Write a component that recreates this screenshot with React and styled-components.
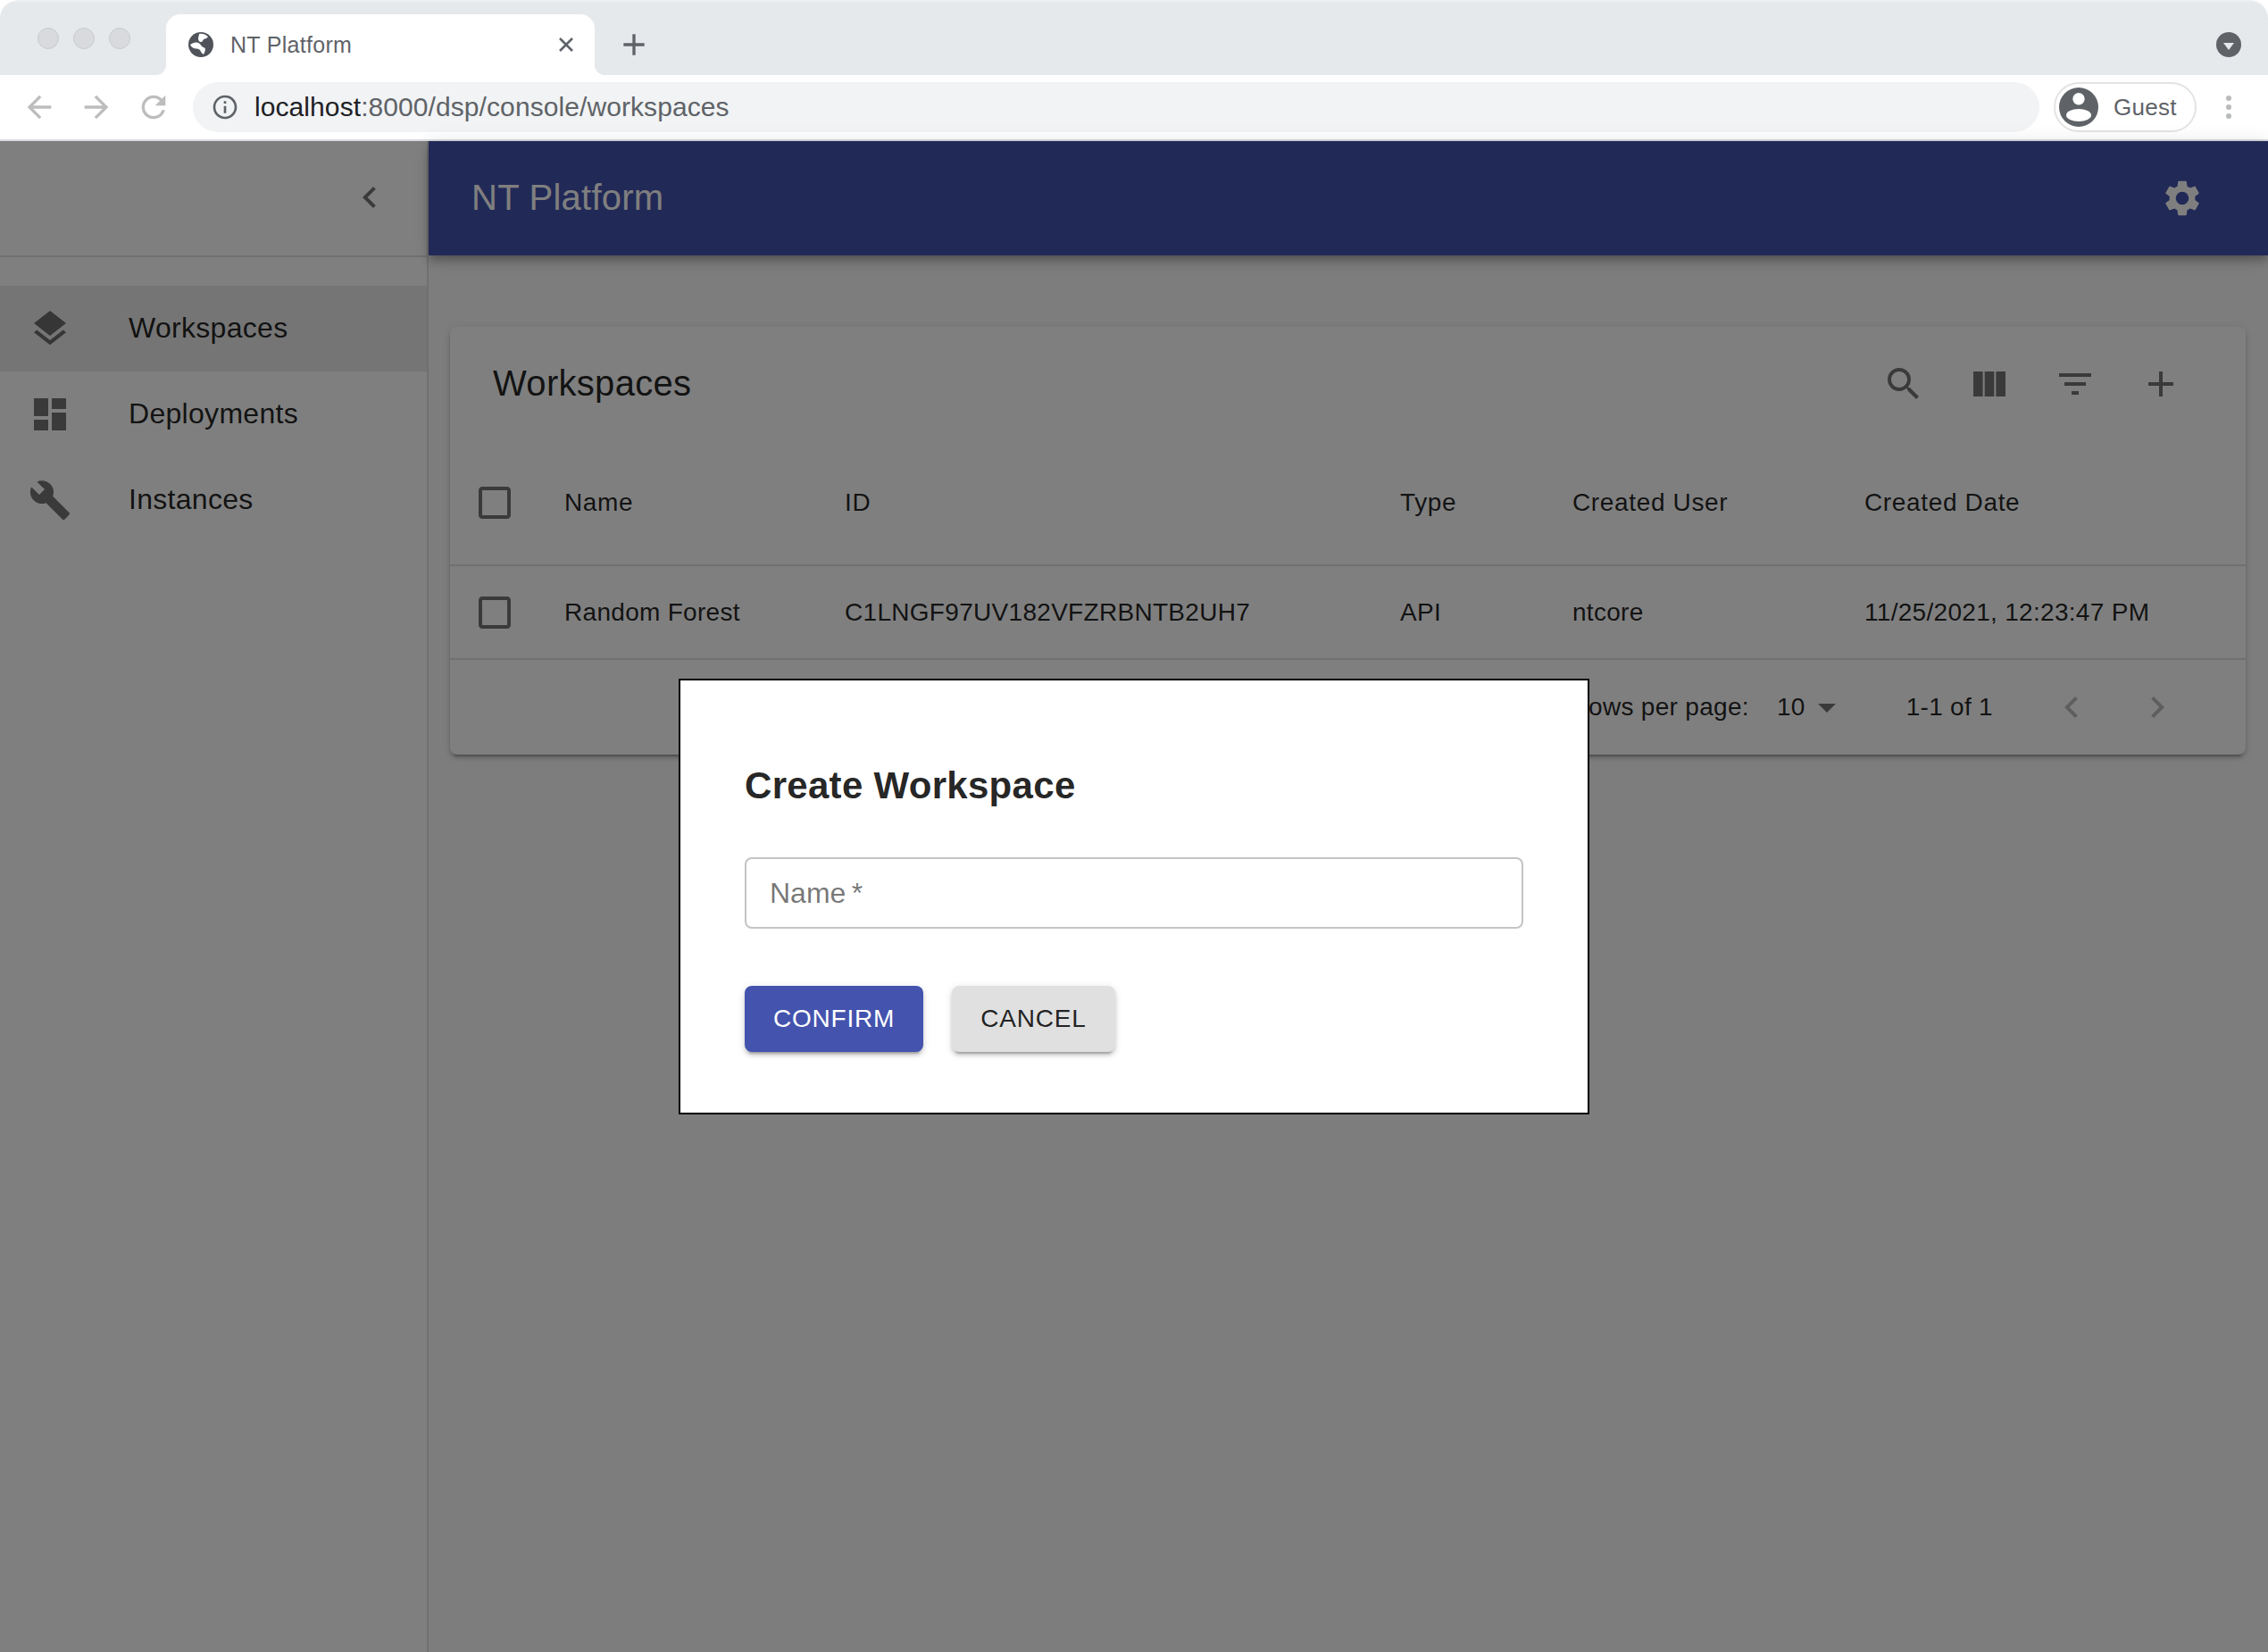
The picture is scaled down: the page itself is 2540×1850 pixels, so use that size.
import styled, { createGlobalStyle } from "styled-components";
import {
  MdLayers,
  MdDashboard,
  MdBuild,
  MdSearch,
  MdViewColumn,
  MdFilterList,
  MdAdd,
  MdSettings,
  MdChevronLeft,
  MdChevronRight,
  MdArrowDropDown,
  MdCheckBoxOutlineBlank,
  MdArrowBack,
  MdArrowForward,
  MdRefresh,
  MdInfoOutline,
} from "react-icons/md";

const GlobalStyle = createGlobalStyle`
  html, body {
    margin: 0;
    padding: 0;
    background: #fff;
  }
  * {
    box-sizing: border-box;
  }
  body {
    font-family: "Liberation Sans", Arial, sans-serif;
  }
`;

const navItems = [
  { label: "Workspaces", Icon: MdLayers, selected: true },
  { label: "Deployments", Icon: MdDashboard },
  { label: "Instances", Icon: MdBuild },
];

const GlobeIcon = () => (
  <svg width="30" height="30" viewBox="0 0 30 30">
    <circle cx="15" cy="15" r="14" fill="#50535a" />
    <path
      d="M13 3c3-1 7 0 10 3-1 2-3 2-5 3-1 1-1 3-3 3-2 0-3-2-3-4 0-2 1-3 1-5z"
      fill="#fff"
    />
    <path
      d="M3 15c3-2 6-3 9-2 3 1 3 4 6 5 3 1 2 4 0 8-2-1-3-3-4-5-2-2-5-1-7-2-2-1-3-2-4-4z"
      fill="#fff"
    />
  </svg>
);

const CloseIcon = () => (
  <svg width="18" height="18" viewBox="0 0 18 18" stroke="#5f6368" strokeWidth="2.6">
    <path d="M2 2l14 14M16 2 2 16" />
  </svg>
);

const AvatarIcon = () => (
  <svg width="44" height="44" viewBox="0 0 44 44">
    <circle cx="22" cy="22" r="22" fill="#5f6368" />
    <circle cx="22" cy="12.7" r="6.7" fill="#fff" />
    <ellipse cx="22" cy="31" rx="14" ry="7" fill="#fff" />
  </svg>
);

const App = () => {
  return (
    <>
      <GlobalStyle />
      <Window>
        <TabStrip>
          <Lights>
            <Light />
            <Light />
            <Light />
          </Lights>
          <Tab>
            <GlobeIcon />
            <TabTitle>NT Platform</TabTitle>
            <CloseIcon />
          </Tab>
          <NewTab>
            <MdAdd />
          </NewTab>
          <TabSearch>
            <span />
          </TabSearch>
        </TabStrip>
        <AddressBar>
          <NavButton>
            <MdArrowBack />
          </NavButton>
          <NavButton>
            <MdArrowForward />
          </NavButton>
          <NavButton>
            <MdRefresh />
          </NavButton>
          <UrlPill>
            <MdInfoOutline />
            <UrlText>
              <b>localhost</b>:8000/dsp/console/workspaces
            </UrlText>
          </UrlPill>
          <Profile>
            <AvatarIcon />
            <span>Guest</span>
          </Profile>
          <MenuDots>
            <i />
            <i />
            <i />
          </MenuDots>
        </AddressBar>
        <AppFrame>
          <Sidebar>
            <SidebarHead>
              <MdChevronLeft />
            </SidebarHead>
            <NavList>
              {navItems.map(({ label, Icon, selected }) => (
                <NavItem key={label} $selected={selected}>
                  <Icon />
                  <span>{label}</span>
                </NavItem>
              ))}
            </NavList>
          </Sidebar>
          <Content>
            <Header>
              <HeaderTitle>NT Platform</HeaderTitle>
              <MdSettings />
            </Header>
            <Main>
              <Card>
                <CardBar>
                  <CardTitle>Workspaces</CardTitle>
                  <CardActions>
                    <MdSearch />
                    <MdViewColumn />
                    <MdFilterList />
                    <MdAdd />
                  </CardActions>
                </CardBar>
                <Table>
                  <colgroup>
                    <col width="96" />
                    <col width="314" />
                    <col width="622" />
                    <col width="193" />
                    <col width="327" />
                    <col />
                  </colgroup>
                  <thead>
                    <HeadRow>
                      <CheckCell>
                        <MdCheckBoxOutlineBlank />
                      </CheckCell>
                      <HeadCell>Name</HeadCell>
                      <HeadCell>ID</HeadCell>
                      <HeadCell>Type</HeadCell>
                      <HeadCell>Created User</HeadCell>
                      <HeadCell>Created Date</HeadCell>
                    </HeadRow>
                  </thead>
                  <tbody>
                    <BodyRow>
                      <CheckCell>
                        <MdCheckBoxOutlineBlank />
                      </CheckCell>
                      <Cell>Random Forest</Cell>
                      <Cell>C1LNGF97UV182VFZRBNTB2UH7</Cell>
                      <Cell>API</Cell>
                      <Cell>ntcore</Cell>
                      <Cell>11/25/2021, 12:23:47 PM</Cell>
                    </BodyRow>
                  </tbody>
                </Table>
                <Pager>
                  <span>Rows per page:</span>
                  <PageSize>
                    10
                    <MdArrowDropDown />
                  </PageSize>
                  <PageRange>1-1 of 1</PageRange>
                  <PageButton>
                    <MdChevronLeft />
                  </PageButton>
                  <PageButton>
                    <MdChevronRight />
                  </PageButton>
                </Pager>
              </Card>
            </Main>
          </Content>
          <Backdrop>
            <Dialog>
              <DialogTitle>Create Workspace</DialogTitle>
              <NameInput placeholder={"Name\u2009*"} />
              <DialogActions>
                <ActionButton $primary>CONFIRM</ActionButton>
                <ActionButton>CANCEL</ActionButton>
              </DialogActions>
            </Dialog>
          </Backdrop>
        </AppFrame>
      </Window>
    </>
  );
};

const Window = styled.div`
  width: 2540px;
  height: 1850px;
  display: flex;
  flex-direction: column;
  overflow: hidden;
`;

const TabStrip = styled.div`
  height: 84px;
  flex: none;
  display: flex;
  align-items: flex-end;
  background: #e6e9ec;
  border-top: 2px solid #eef0f2;
  border-radius: 20px 20px 0 0;
`;

const Lights = styled.div`
  width: 186px;
  height: 100%;
  display: flex;
  gap: 16px;
  padding: 29px 0 0 42px;
`;

const Light = styled.span`
  width: 24px;
  height: 24px;
  border-radius: 50%;
  background: #d8dadd;
  border: 1px solid #c8cacd;
`;

const Tab = styled.div`
  position: relative;
  width: 480px;
  height: 68px;
  display: flex;
  align-items: center;
  padding: 0 23px 0 24px;
  background: #fff;
  border-radius: 16px 16px 0 0;
  &::before,
  &::after {
    content: "";
    position: absolute;
    bottom: 0;
    width: 12px;
    height: 12px;
  }
  &::before {
    left: -12px;
    background: radial-gradient(circle at 0 0, #e6e9ec 12px, #fff 12.5px);
  }
  &::after {
    right: -12px;
    background: radial-gradient(circle at 100% 0, #e6e9ec 12px, #fff 12.5px);
  }
`;

const TabTitle = styled.span`
  flex: 1;
  margin-left: 18px;
  font-size: 25px;
  letter-spacing: 0.3px;
  color: #5f6368;
`;

const NewTab = styled.div`
  width: 40px;
  height: 68px;
  margin-left: 24px;
  display: flex;
  align-items: center;
  justify-content: center;
  font-size: 40px;
  color: #5f6368;
  svg {
    flex: none;
  }
`;

const TabSearch = styled.div`
  margin-left: auto;
  width: 28px;
  height: 28px;
  margin-right: 30px;
  margin-bottom: 20px;
  display: flex;
  align-items: center;
  justify-content: center;
  border-radius: 50%;
  background: #5f6368;
  span {
    width: 0;
    height: 0;
    margin-top: 3px;
    border-left: 6px solid transparent;
    border-right: 6px solid transparent;
    border-top: 8px solid #e6e9ec;
  }
`;

const AddressBar = styled.div`
  height: 74px;
  flex: none;
  display: flex;
  align-items: flex-start;
  padding: 8px 8px 0 12px;
  background: #fff;
  border-bottom: 2px solid #d8dbdf;
`;

const NavButton = styled.div`
  width: 64px;
  height: 56px;
  display: flex;
  align-items: center;
  justify-content: center;
  font-size: 40px;
  color: #bdbdbd;
`;

const UrlPill = styled.div`
  flex: 1;
  height: 56px;
  margin-left: 12px;
  display: flex;
  align-items: center;
  padding: 0 20px;
  background: #f1f3f4;
  border-radius: 28px;
  svg {
    font-size: 32px;
    color: #5f6368;
  }
`;

const UrlText = styled.span`
  margin-left: 17px;
  font-size: 30px;
  letter-spacing: 0.08px;
  color: #5f6368;
  b {
    font-weight: 400;
    color: #202124;
  }
`;

const Profile = styled.div`
  width: 160px;
  height: 56px;
  margin-left: 16px;
  display: flex;
  align-items: center;
  gap: 17px;
  padding-left: 4px;
  border: 2px solid #e2e3e5;
  border-radius: 28px;
  font-size: 26px;
  letter-spacing: 0.3px;
  color: #5f6368;
`;

const MenuDots = styled.div`
  width: 72px;
  height: 56px;
  display: flex;
  flex-direction: column;
  align-items: center;
  justify-content: center;
  gap: 4px;
  i {
    width: 6px;
    height: 6px;
    border-radius: 50%;
    background: #b9babb;
  }
`;

const AppFrame = styled.div`
  position: relative;
  flex: 1;
  display: flex;
  min-height: 0;
`;

const Sidebar = styled.aside`
  width: 480px;
  flex: none;
  background: #fff;
  border-right: 2px solid rgba(0, 0, 0, 0.12);
`;

const SidebarHead = styled.div`
  height: 130px;
  display: flex;
  align-items: center;
  justify-content: flex-end;
  padding: 0 40px 2px 0;
  border-bottom: 2px solid rgba(0, 0, 0, 0.12);
  font-size: 48px;
  color: rgba(0, 0, 0, 0.54);
`;

const NavList = styled.nav`
  padding-top: 32px;
`;

const NavItem = styled.div`
  height: 96px;
  display: flex;
  align-items: center;
  gap: 64px;
  padding-left: 32px;
  font-size: 32px;
  letter-spacing: 0.3px;
  color: rgba(0, 0, 0, 0.87);
  background: ${(p) => (p.$selected ? "rgba(0, 0, 0, 0.08)" : "transparent")};
  svg {
    font-size: 48px;
    color: rgba(0, 0, 0, 0.54);
  }
  span {
    padding-bottom: 2px;
  }
`;

const Content = styled.div`
  flex: 1;
  min-width: 0;
  display: flex;
  flex-direction: column;
  background: #fafafa;
`;

const Header = styled.header`
  position: relative;
  height: 128px;
  flex: none;
  display: flex;
  align-items: center;
  justify-content: space-between;
  padding: 0 72px 0 48px;
  background: #4353ae;
  color: #fff;
  box-shadow: 0 4px 8px -2px rgba(0, 0, 0, 0.2), 0 8px 10px 0 rgba(0, 0, 0, 0.14), 0 2px 20px 0 rgba(0, 0, 0, 0.12);
  svg {
    font-size: 48px;
  }
`;

const HeaderTitle = styled.h1`
  margin: 0 0 2px;
  font-size: 40px;
  font-weight: 400;
  letter-spacing: 0.25px;
`;

const Main = styled.main`
  flex: 1;
  padding: 80px 25px 0 24px;
`;

const Card = styled.section`
  background: #fff;
  border-radius: 8px;
  box-shadow: 0 6px 2px -4px rgba(0, 0, 0, 0.2), 0 4px 4px 0 rgba(0, 0, 0, 0.14), 0 2px 10px 0 rgba(0, 0, 0, 0.12);
`;

const CardBar = styled.div`
  height: 128px;
  display: flex;
  align-items: center;
  justify-content: space-between;
  padding: 0 71px 0 48px;
`;

const CardTitle = styled.h2`
  margin: 0 0 2px;
  font-size: 40px;
  font-weight: 400;
  letter-spacing: 0.3px;
  color: rgba(0, 0, 0, 0.87);
`;

const CardActions = styled.div`
  display: flex;
  gap: 48px;
  font-size: 48px;
  color: rgba(0, 0, 0, 0.54);
  svg {
    display: block;
  }
`;

const Table = styled.table`
  width: 100%;
  table-layout: fixed;
  border-collapse: collapse;
`;

const HeadRow = styled.tr`
  height: 139px;
  border-bottom: 2px solid #e0e0e0;
`;

const BodyRow = styled.tr`
  height: 105px;
  border-bottom: 2px solid #e0e0e0;
`;

const Cell = styled.td`
  padding: 0 0 0 32px;
  font-size: 28px;
  letter-spacing: 0.3px;
  text-align: left;
  white-space: nowrap;
  color: rgba(0, 0, 0, 0.87);
`;

const HeadCell = styled.th`
  padding: 0 0 0 32px;
  font-size: 28px;
  font-weight: 400;
  letter-spacing: 0.65px;
  text-align: left;
  white-space: nowrap;
  color: rgba(0, 0, 0, 0.87);
`;

const CheckCell = styled.td`
  padding: 0 0 0 26px;
  font-size: 48px;
  color: rgba(0, 0, 0, 0.54);
  svg {
    display: block;
  }
`;

const Pager = styled.div`
  height: 106px;
  display: flex;
  align-items: center;
  justify-content: flex-end;
  padding-right: 51px;
  font-size: 28px;
  letter-spacing: 0.3px;
  color: rgba(0, 0, 0, 0.87);
`;

const PageSize = styled.div`
  display: flex;
  align-items: center;
  margin-left: 31px;
  svg {
    font-size: 48px;
    color: rgba(0, 0, 0, 0.54);
  }
`;

const PageRange = styled.span`
  margin: 0 40px 0 65px;
`;

const PageButton = styled.div`
  width: 96px;
  display: flex;
  justify-content: center;
  font-size: 48px;
  color: rgba(0, 0, 0, 0.26);
`;

const Backdrop = styled.div`
  position: absolute;
  inset: 0;
  display: flex;
  align-items: center;
  justify-content: center;
  background: rgba(0, 0, 0, 0.5);
`;

const Dialog = styled.div`
  width: 1020px;
  height: 488px;
  padding: 94px 72px 0;
  background: #fff;
  border: 2px solid #000;
`;

const DialogTitle = styled.h2`
  margin: 0 0 56px;
  font-size: 42px;
  line-height: 48px;
  font-weight: 700;
  letter-spacing: 0.3px;
  color: rgba(0, 0, 0, 0.87);
`;

const NameInput = styled.input`
  display: block;
  width: 100%;
  height: 80px;
  padding: 0 26px;
  border: 2px solid rgba(0, 0, 0, 0.23);
  border-radius: 8px;
  outline: none;
  background: #fff;
  font-family: inherit;
  font-size: 32px;
  color: rgba(0, 0, 0, 0.87);
  &::placeholder {
    color: rgba(0, 0, 0, 0.54);
    opacity: 1;
  }
`;

const DialogActions = styled.div`
  display: flex;
  gap: 32px;
  margin-top: 64px;
`;

const ActionButton = styled.button`
  height: 74px;
  padding: 0 32px;
  border: 0;
  border-radius: 8px;
  background: ${(p) => (p.$primary ? "#4353ae" : "#e0e0e0")};
  color: ${(p) => (p.$primary ? "#fff" : "rgba(0, 0, 0, 0.87)")};
  font-family: inherit;
  font-size: 28px;
  letter-spacing: 0.8px;
  box-shadow: 0 6px 2px -4px rgba(0, 0, 0, 0.2), 0 4px 4px 0 rgba(0, 0, 0, 0.14), 0 2px 10px 0 rgba(0, 0, 0, 0.12);
`;

export default App;
